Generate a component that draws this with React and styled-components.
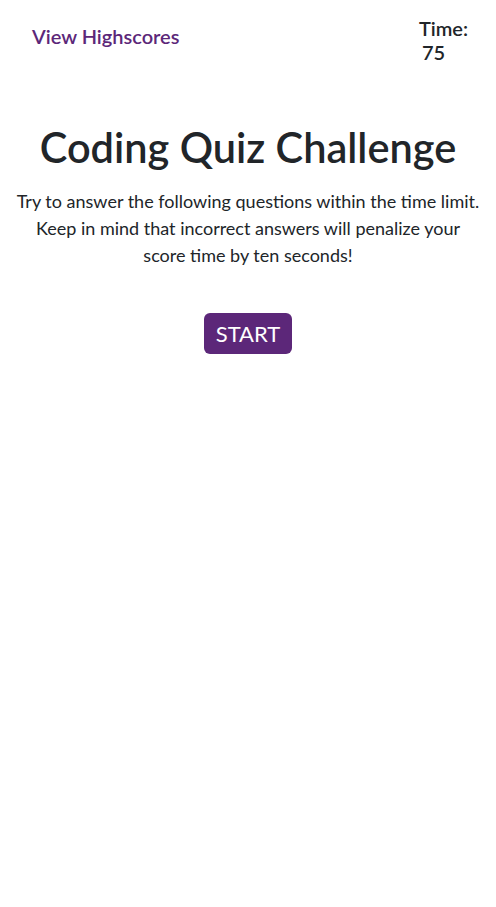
import React from 'react';
import styled, { createGlobalStyle } from 'styled-components';

const GlobalStyle = createGlobalStyle`
    body {
        margin: 0;
        background: #fff;
        font-family: Lato, "Open Sans", sans-serif;
        color: #212529;
    }
`;

const App = () => {
    return (
        <>
            <GlobalStyle />
            <Header>
                <HighscoresLink href="#">View Highscores</HighscoresLink>
                <Timer>
                    Time:
                    <TimerValue>75</TimerValue>
                </Timer>
            </Header>
            <Main>
                <Title>Coding Quiz Challenge</Title>
                <Intro>
                    Try to answer the following questions within the time limit.
                    Keep in mind that incorrect answers will penalize your
                    score time by ten seconds!
                </Intro>
                <StartButton>START</StartButton>
            </Main>
        </>
    );
};

const Header = styled.header`
    display: flex;
    justify-content: space-between;
    align-items: flex-start;
    padding: 16px 27px 0 32px;
`;

const HighscoresLink = styled.a`
    margin-top: 8px;
    color: #5c2779;
    font-size: 20px;
    font-weight: 600;
    text-decoration: none;
    line-height: 24px;
`;

const Timer = styled.div`
    display: flex;
    flex-direction: column;
    margin-right: 1px;
    font-size: 20px;
    font-weight: 600;
    line-height: 24px;
`;

const TimerValue = styled.span`
    padding-left: 3px;
`;

const Main = styled.main`
    display: flex;
    flex-direction: column;
    align-items: center;
    text-align: center;
    padding: 59px 14px 0;
`;

const Title = styled.h1`
    margin: 0 0 17px;
    font-size: 41.5px;
    font-weight: 600;
    line-height: 48px;
`;

const Intro = styled.p`
    margin: 0 0 44px;
    font-size: 18px;
    line-height: 27px;
`;

const StartButton = styled.button`
    padding: 0 12px;
    height: 41px;
    border: none;
    border-radius: 6px;
    background: #5c2779;
    color: #fff;
    font-family: inherit;
    font-size: 22px;
    cursor: pointer;
`;

export default App;
